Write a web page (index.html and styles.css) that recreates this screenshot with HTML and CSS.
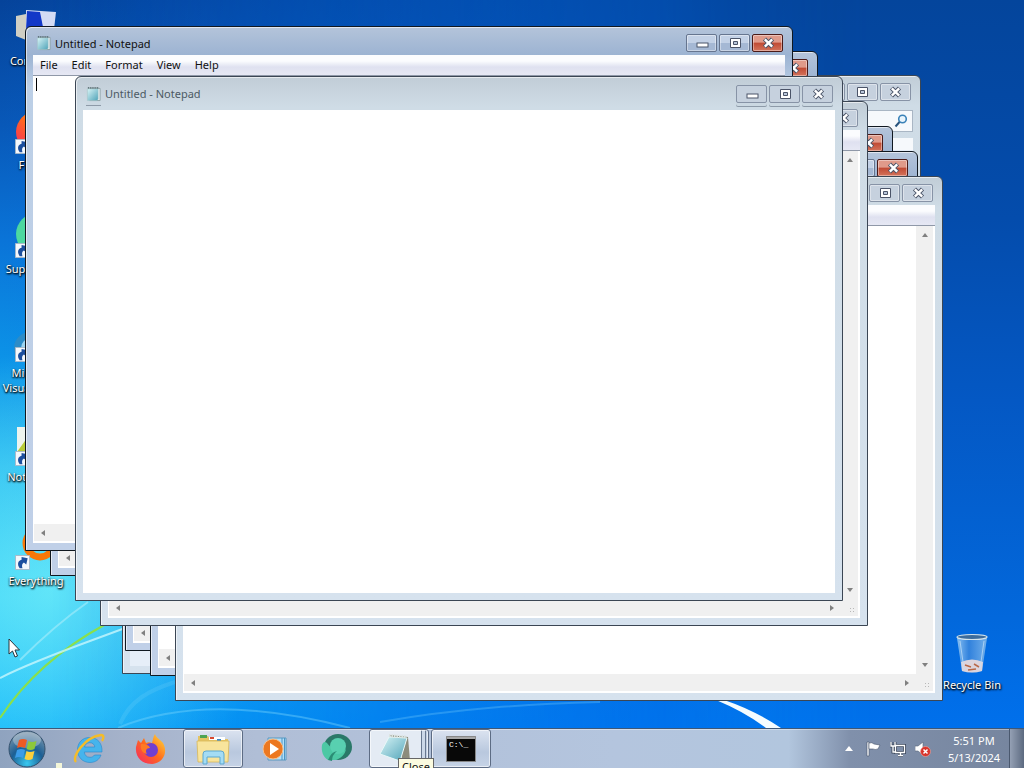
FILE: index.html
```html
<!DOCTYPE html>
<html lang="en">
<head>
    <meta charset="UTF-8">
    <meta name="viewport" content="width=device-width, initial-scale=1.0">
    <title>Desktop</title>
    <link rel="stylesheet" href="styles.css">
</head>
<body>
    <svg class="defs" width="0" height="0" aria-hidden="true">
        <defs>
            <linearGradient id="teal" x1="0" y1="0" x2="1" y2="1">
                <stop offset="0" stop-color="#d8f4f6"/>
                <stop offset="1" stop-color="#4fa3b8"/>
            </linearGradient>
            <linearGradient id="fox" x1="0" y1="1" x2="1" y2="0">
                <stop offset="0" stop-color="#f5246a"/>
                <stop offset="0.5" stop-color="#ff6a1c"/>
                <stop offset="1" stop-color="#ffe23c"/>
            </linearGradient>
            <radialGradient id="orb" cx="0.5" cy="0.9" r="0.9">
                <stop offset="0" stop-color="#38c8f0"/>
                <stop offset="0.5" stop-color="#1c5f94"/>
                <stop offset="1" stop-color="#7f98ac"/>
            </radialGradient>
            <linearGradient id="glass" x1="0" y1="0" x2="1" y2="0">
                <stop offset="0" stop-color="#9cccf4"/>
                <stop offset="0.4" stop-color="#3a86dc"/>
                <stop offset="1" stop-color="#86bcec"/>
            </linearGradient>
        </defs>
        <symbol id="i-min" viewBox="0 0 16 12"><rect x="3" y="6" width="11" height="4" fill="#fff" stroke="#4b5468"/></symbol>
        <symbol id="i-max" viewBox="0 0 16 12"><path d="M3.500 1.500h10v9h-10z" fill="#fff" stroke="#4b5468"/><path d="M6.500 4.500h4v3h-4z" fill="#b9c6da" stroke="#4b5468"/></symbol>
        <symbol id="i-close" viewBox="0 0 16 12"><path d="M4.500 2l8 8M12.500 2l-8 8" stroke="#4b5468" stroke-width="4.400"/><path d="M4.800 2.300l7.400 7.400M12.200 2.300l-7.400 7.400" stroke="#fff" stroke-width="2.400"/></symbol>
        <symbol id="i-note" viewBox="0 0 16 16"><path d="M4 2h11v13H4z" fill="#f4f8f8" stroke="#8aa0a4"/><path d="M1.500 2.500h11.500v11l-1.500 1.500h-10z" fill="url(#teal)" stroke="#a4c4ca" stroke-width=".6"/><path d="M2 1.500h11" stroke="#506468" stroke-width="2" stroke-dasharray="1 1"/></symbol>
        <symbol id="i-short" viewBox="0 0 16 16"><path d="M.5.500h15v15H.500z" fill="#f4f8fc" stroke="#a8b8c8"/><path d="M5 14C2 10 3 6 7 5V2l6.500 1.500L12 10l-2.500-2C7.500 9 7 11.500 8 14z" fill="#1c4f9e"/></symbol>
    </svg>

    <div class="desktop">
        <svg class="wallpaper" viewBox="0 0 1024 728" preserveAspectRatio="none" aria-hidden="true">
            <path d="M0 718C25 680 58 650 106 624" fill="none" stroke="#8be04a" stroke-width="2"/>
            <path d="M0 678C35 660 80 645 125 628" fill="none" stroke="#c8f6fc" stroke-width="2" opacity=".8"/>
            <path d="M20 660C45 635 65 618 88 602" fill="none" stroke="#a8ecfa" stroke-width="2" opacity=".6"/>
            <path d="M118 728C175 704 250 702 350 728" fill="none" stroke="#7cd8fc" stroke-width="2" opacity=".4"/>
            <path d="M120 724C130 700 150 690 175 682" fill="none" stroke="#7cd8fc" stroke-width="4" opacity=".2"/>
            <path d="M380 722C460 708 530 704 600 702" fill="none" stroke="#7cd0fc" stroke-width="2" opacity=".3"/>
            <path d="M724 700Q754 710 781 728H766Q745 712 716 700z" fill="#f4fcff"/>
        </svg>

        <div class="icons">
            <div class="icon">
                <svg width="48" height="48" viewBox="0 0 48 48"><path d="M4 14l10-2v26l-10-4z" fill="#d0cfc4"/><path d="M14 8l30 2-3 26-27-4z" fill="#d4dcf4"/><path d="M15 9l13 1 4 20-18-2z" fill="#1238c8"/></svg>
                <span>Computer</span>
            </div>
            <div class="icon">
                <svg width="48" height="48" viewBox="0 0 48 48"><circle cx="25" cy="26" r="21" fill="url(#fox)"/><circle cx="27" cy="25" r="10" fill="#7340d0"/><use href="#i-short" x="3" y="33" width="15" height="15"/></svg>
                <span>Firefox</span>
            </div>
            <div class="icon">
                <svg width="48" height="48" viewBox="0 0 48 48"><circle cx="25" cy="24" r="21" fill="#4cd8a0"/><use href="#i-short" x="3" y="33" width="15" height="15"/></svg>
                <span>Supermium</span>
            </div>
            <div class="icon">
                <svg width="48" height="48" viewBox="0 0 48 48"><circle cx="18" cy="34" r="16" fill="#2c8cc8"/><circle cx="19" cy="34" r="10" fill="#9cd4f0"/><use href="#i-short" x="3" y="33" width="15" height="15"/></svg>
                <span>Microsoft Visual Studio</span>
            </div>
            <div class="icon">
                <svg width="48" height="48" viewBox="0 0 48 48"><path d="M5 9h38v36H5z" fill="#eef4ee"/><path d="M5 34l10-14 10 14z" fill="#b8cc38"/><use href="#i-short" x="3" y="33" width="15" height="15"/></svg>
                <span>Notepad++</span>
            </div>
            <div class="icon">
                <svg width="48" height="48" viewBox="0 0 48 48"><circle cx="28" cy="21" r="14" fill="none" stroke="#f87808" stroke-width="7"/><use href="#i-short" x="3" y="33" width="15" height="15"/></svg>
                <span>Everything</span>
            </div>
        </div>

        <div class="icon bin">
            <svg width="48" height="48" viewBox="0 0 48 48"><path d="M9 12l5 33q10 3 20 0l5-33z" fill="url(#glass)" opacity=".85"/><path d="M13 36q11-5 22 0l-1 9q-10 3-20 0z" fill="#dcd4dc"/><path d="M17 39l6 2M26 38l5 3M20 44l8-1" stroke="#b86848" stroke-width="1.500"/><ellipse cx="24" cy="11" rx="15" ry="2.500" fill="#3c6c9c" stroke="#d4e4ec" stroke-width="1.200"/><path d="M12 15l4 28M36 15l-4 28" stroke="#c4e0f8" opacity=".7"/></svg>
            <span>Recycle Bin</span>
        </div>

        <div class="window explorer">
            <div class="title">
                <div class="buttons">
                    <button aria-label="Minimize"><svg><use href="#i-min"/></svg></button>
                    <button aria-label="Maximize"><svg><use href="#i-max"/></svg></button>
                    <button aria-label="Close"><svg><use href="#i-close"/></svg></button>
                </div>
            </div>
            <div class="search">
                <input type="text" aria-label="Search">
                <svg width="14" height="14" viewBox="0 0 14 14"><circle cx="8.500" cy="5" r="3.800" fill="#e8f4fc" stroke="#3a82b8" stroke-width="1.600"/><path d="M5.500 8L1.500 12.500" stroke="#27537c" stroke-width="2"/></svg>
            </div>
            <div class="client"></div>
        </div>

        <div class="window active w5">
            <div class="title">
                <div class="buttons">
                    <button aria-label="Minimize"><svg><use href="#i-min"/></svg></button>
                    <button aria-label="Maximize"><svg><use href="#i-max"/></svg></button>
                    <button class="close" aria-label="Close"><svg><use href="#i-close"/></svg></button>
                </div>
            </div>
            <div class="menu"></div>
            <div class="client">
                <textarea aria-label="Text"></textarea>
                <div class="vscroll"><i class="up"></i><i class="down"></i></div>
                <div class="hscroll"><i class="left"></i><i class="right"></i></div>
                <div class="grip"></div>
            </div>
        </div>

        <div class="window active w6">
            <div class="title">
                <div class="buttons">
                    <button aria-label="Minimize"><svg><use href="#i-min"/></svg></button>
                    <button aria-label="Maximize"><svg><use href="#i-max"/></svg></button>
                    <button class="close" aria-label="Close"><svg><use href="#i-close"/></svg></button>
                </div>
            </div>
            <div class="menu"></div>
            <div class="client">
                <textarea aria-label="Text"></textarea>
                <div class="vscroll"><i class="up"></i><i class="down"></i></div>
                <div class="hscroll"><i class="left"></i><i class="right"></i></div>
                <div class="grip"></div>
            </div>
        </div>

        <div class="window w7">
            <div class="title">
                <div class="buttons">
                    <button aria-label="Minimize"><svg><use href="#i-min"/></svg></button>
                    <button aria-label="Maximize"><svg><use href="#i-max"/></svg></button>
                    <button aria-label="Close"><svg><use href="#i-close"/></svg></button>
                </div>
            </div>
            <div class="menu"></div>
            <div class="client">
                <textarea aria-label="Text"></textarea>
                <div class="vscroll"><i class="up"></i><i class="down"></i></div>
                <div class="hscroll"><i class="left"></i><i class="right"></i></div>
                <div class="grip"></div>
            </div>
        </div>

        <div class="window w4">
            <div class="title">
                <div class="buttons">
                    <button aria-label="Minimize"><svg><use href="#i-min"/></svg></button>
                    <button aria-label="Maximize"><svg><use href="#i-max"/></svg></button>
                    <button aria-label="Close"><svg><use href="#i-close"/></svg></button>
                </div>
            </div>
            <div class="menu"></div>
            <div class="client">
                <textarea aria-label="Text"></textarea>
                <div class="vscroll"><i class="up"></i><i class="down"></i></div>
                <div class="hscroll"><i class="left"></i><i class="right"></i></div>
                <div class="grip"></div>
            </div>
        </div>

        <div class="window active w2">
            <div class="title">
                <div class="buttons">
                    <button aria-label="Minimize"><svg><use href="#i-min"/></svg></button>
                    <button aria-label="Maximize"><svg><use href="#i-max"/></svg></button>
                    <button class="close" aria-label="Close"><svg><use href="#i-close"/></svg></button>
                </div>
            </div>
            <div class="menu"></div>
            <div class="client">
                <textarea aria-label="Text"></textarea>
                <div class="vscroll"><i class="up"></i><i class="down"></i></div>
                <div class="hscroll"><i class="left"></i><i class="right"></i></div>
                <div class="grip"></div>
            </div>
        </div>

        <div class="window active w1">
            <div class="title">
                <svg class="note" width="15" height="16"><use href="#i-note"/></svg>
                <span>Untitled - Notepad</span>
                <div class="buttons">
                    <button aria-label="Minimize"><svg><use href="#i-min"/></svg></button>
                    <button aria-label="Maximize"><svg><use href="#i-max"/></svg></button>
                    <button class="close" aria-label="Close"><svg><use href="#i-close"/></svg></button>
                </div>
            </div>
            <div class="menu">
                <button>File</button>
                <button>Edit</button>
                <button>Format</button>
                <button>View</button>
                <button>Help</button>
            </div>
            <div class="client">
                <textarea aria-label="Text"></textarea>
                <div class="vscroll"><i class="up"></i><i class="down"></i></div>
                <div class="hscroll"><i class="left"></i><i class="right"></i></div>
                <div class="grip"></div>
                <div class="caret"></div>
            </div>
        </div>

        <div class="window w3">
            <div class="title">
                <svg class="note" width="15" height="16"><use href="#i-note"/></svg>
                <span>Untitled - Notepad</span>
                <div class="buttons">
                    <button aria-label="Minimize"><svg><use href="#i-min"/></svg></button>
                    <button aria-label="Maximize"><svg><use href="#i-max"/></svg></button>
                    <button aria-label="Close"><svg><use href="#i-close"/></svg></button>
                </div>
            </div>
            <div class="client blank">
                <textarea aria-label="Text"></textarea>
            </div>
        </div>

        <svg class="pointer" width="13" height="20" viewBox="0 0 13 20" aria-hidden="true"><path d="M1 1v15l3.500-3 2.500 6 2.500-1-2.500-6h4.500z" fill="#fff" stroke="#28343c"/></svg>
    </div>

    <div class="taskbar">
        <button class="start" aria-label="Start">
            <svg width="38" height="38" viewBox="0 0 38 38"><circle cx="19" cy="19" r="18" fill="url(#orb)" stroke="#33506c"/><ellipse cx="19" cy="10" rx="14" ry="8" fill="#fff" opacity=".3"/><path d="M11 10q4-2 8 0l-2 8q-4-2-8 0z" fill="#ec5a24"/><path d="M20.500 11q3 2 8 0l-2 8q-4 2-8 0z" fill="#8cc83c"/><path d="M9 20q4-2 8 0l-2 8q-4-2-8 0z" fill="#3c9ce8"/><path d="M18.500 21q3 2 8 0l-2 8q-4 2-8 0z" fill="#fcd03c"/></svg>
        </button>
        <div class="tasks">
            <button aria-label="Internet Explorer">
                <svg width="32" height="32" viewBox="0 0 32 32"><path d="M16.500 4.500C9 4.500 4.500 10 4.500 17S9.500 29.500 17 29.500c5.500 0 9.500-3 11-7.500h-6.500c-1 1.500-2.500 2.300-4.500 2.300-3.500 0-5.500-2.300-5.700-5.300H29C29.500 10 24.500 4.500 16.500 4.500zM11.500 14c.6-2.700 2.500-4.300 5.300-4.300s4.600 1.600 5 4.300z" fill="#46b4ec" stroke="#2888cc" stroke-width=".6"/><path d="M3 29C-2 24 12 4 28 2c3 0 3 3 1 6" fill="none" stroke="#f4bc28" stroke-width="2.400"/></svg>
            </button>
            <button aria-label="Firefox">
                <svg width="32" height="32" viewBox="0 0 32 32"><path d="M20 1c1 4 5 5 8 9 5 9 1 20-11 21C7 31 0 24 1 14l2-7 3 3 3-5 2 5c2-1 4-1 6 0 1-3 1-6 3-9z" fill="url(#fox)"/><circle cx="16" cy="17" r="7" fill="#6f3fd0"/><path d="M6 11c5 0 8 1 9 4-4 0-5 3-3 6-5-1-7-5-6-10z" fill="#ff7a24"/></svg>
            </button>
            <button class="open" aria-label="Windows Explorer">
                <svg width="36" height="34" viewBox="0 0 36 34"><path d="M3 4h10l2 3h18v23H3z" fill="#e4c464"/><path d="M5 3h7v3H5z" fill="#4ca454"/><path d="M14 5h16v3H14z" fill="#fff"/><path d="M15 5h4v2h-4z" fill="#d84830"/><path d="M22 7h4v2h-4z" fill="#3c88c8"/><path d="M2 9h32l-1 21H3z" fill="#f8e49c" stroke="#d8b858" stroke-width=".8"/><path d="M8 32V22q0-3 3-3h15q3 0 3 3v10h-4v-7H12v7z" fill="#a4dcf4" stroke="#5ca8d0"/></svg>
            </button>
            <button aria-label="Windows Media Player">
                <svg width="30" height="28" viewBox="0 0 30 28"><path d="M8 3h18v22H8z" fill="#b4e0f8" stroke="#5898c0"/><path d="M22 3v22M24.500 3v22" stroke="#4c94c4"/><circle cx="13" cy="14" r="10" fill="#ec7820" stroke="#f8c08c"/><path d="M10 8l9 6-9 6z" fill="#fff"/></svg>
            </button>
            <button aria-label="Supermium">
                <svg width="34" height="32" viewBox="0 0 34 32"><ellipse cx="18" cy="14" rx="14" ry="13" fill="#2a7868"/><path d="M2 12C3 9 5 8 7 10c3 4 8 8 13 8 3 0 5-1 6-2-1 6-5 9-10 11H8C3 24 1 18 2 12z" fill="#4cc8a4"/><circle cx="18" cy="13" r="8" fill="#58d0b0"/><path d="M8 27q3-8 9-9-5 4-5 10z" fill="#2a8c74"/></svg>
            </button>
            <button class="open stack" aria-label="Notepad">
                <svg width="34" height="32" viewBox="0 0 34 32"><path d="M12 2l18 2 2 24-6 1z" fill="#8c8c7c"/><path d="M11 4l18 1-7 23-20-7z" fill="url(#teal)" stroke="#e8f8f8"/><path d="M11 2.500l17 1.500" stroke="#dce4e0" stroke-width="3" stroke-dasharray="1.500 1"/></svg>
            </button>
            <button class="open" aria-label="Command Prompt">
                <svg width="30" height="26" viewBox="0 0 30 26"><path d="M.5.500h29v25H.500z" fill="#080808" stroke="#888"/><path d="M1 1h28v2H1z" fill="#a8a8a8"/><text x="3" y="11" class="prompt">C:\_</text></svg>
            </button>
        </div>
        <div class="tray">
            <svg width="8" height="5" viewBox="0 0 8 5"><path d="M0 5l4-5 4 5z" fill="#fff"/></svg>
            <svg width="16" height="16" viewBox="0 0 16 16"><path d="M2 1h2v14H2z" fill="#fff" stroke="#44526a" stroke-width=".6"/><path d="M4 2q3-1 5 1l6 1-2 4q-3 1-5 0H4z" fill="#fff" stroke="#44526a" stroke-width=".6"/></svg>
            <svg width="16" height="16" viewBox="0 0 16 16"><path d="M5.500 4.500h9v7h-9zM8 14.500h5M10.500 12v3M1 1v4h4V1M3 5v6h2" fill="none" stroke="#3c485c" stroke-width="3"/><path d="M5.500 4.500h9v7h-9zM8 14.500h5M10.500 12v3M1 1v4h4V1M3 5v6h2" fill="none" stroke="#fff" stroke-width="1.300"/></svg>
            <svg width="16" height="16" viewBox="0 0 16 16"><path d="M0 5h3l5-4v13l-5-4H0z" fill="#fff" stroke="#58647a" stroke-width=".6"/><circle cx="10.500" cy="10.500" r="5" fill="#d8342c" stroke="#f0a8a0" stroke-width=".6"/><path d="M8.500 8.500l4 4M12.500 8.500l-4 4" stroke="#fff" stroke-width="1.500"/></svg>
            <div class="clock">
                <div>5:51 PM</div>
                <div>5/13/2024</div>
            </div>
            <button class="show" aria-label="Show desktop"></button>
        </div>
        <div class="tip">Close</div>
        <div class="speck"></div>
    </div>
</body>
</html>
```
FILE: styles.css
```css
*{
    margin: 0;
    padding: 0;
    box-sizing: border-box;
}

body{
    height: 100vh;
    display: flex;
    flex-direction: column;
    overflow: hidden;
    font-family: "Noto Sans", "Open Sans", sans-serif;
    font-size: 11px;
    line-height: 15px;
    color: #111;
}

button{
    font: inherit;
    color: inherit;
    background: none;
    border: none;
}

.defs{
    position: absolute;
}

.desktop{
    flex: 1;
    position: relative;
    overflow: hidden;
    background:
        radial-gradient(ellipse 220px 240px at 50px 590px, rgba(120, 245, 250, 0.7), rgba(60, 210, 250, 0)),
        radial-gradient(ellipse 200px 120px at 980px 0, rgba(20, 84, 150, 0.6), rgba(20, 84, 150, 0)),
        linear-gradient(90deg, rgba(0, 100, 220, 0) 0%, rgba(0, 108, 236, 0.8) 65%, rgba(0, 96, 220, 0) 85%),
        linear-gradient(#05439a 0%, #0858b8 17%, #0a74d8 33%, #0c94e8 50%, #22b4f0 64%, #2cc4f6 82%, #08aefa 100%);
}

/* the right side of the sky stays dark further down */
.desktop::before{
    content: "";
    position: absolute;
    inset: 0;
    background: linear-gradient(#04459c, #044cac 30%, #0458c4 55%, #0268dc 85%, #0070ec);
    mask-image: linear-gradient(90deg, transparent 5%, black 85%);
}

.wallpaper{
    position: relative;
    display: block;
    width: 100%;
    height: 100%;
}

/* desktop icons */
.icons{
    position: absolute;
    top: 2px;
    left: 0;
}

.icon{
    width: 72px;
    height: 104px;
    display: flex;
    flex-direction: column;
    align-items: center;
    gap: 3px;
    color: white;
    text-align: center;
    text-shadow: 1px 1px 2px black, 0 1px 2px black;
}

.bin{
    position: absolute;
    right: 16px;
    bottom: -2px;
}

/* windows */
.window{
    position: absolute;
    width: 75%;
    height: 525px;
    padding: 0 7px 7px;
    display: flex;
    flex-direction: column;
    border: 1px solid #3b4654;
    border-radius: 6px 6px 0 0;
    background: linear-gradient(#c1cdd7, #cfdce6 30px, #d6e2ee);
    box-shadow: inset 1px 1px 0 rgba(255, 255, 255, 0.6);
}

.active{
    border-color: #101820;
    background: linear-gradient(#b4c4da, #9cb3d2 28px, #bccfe6 60px, #c0d0e8);
}

.w1{ left: 25px; top: 26px; }
.w2{ left: 50px; top: 51px; }
.w3{ left: 75px; top: 76px; }
.w4{ left: 100px; top: 101px; }
.w5{ left: 125px; top: 126px; }
.w6{ left: 150px; top: 151px; }
.w7{ left: 175px; top: 176px; }

.explorer{
    left: 122px;
    top: 75px;
    width: 78%;
    height: 599px;
}

.title{
    height: 28px;
    padding: 4px 2px 0 3px;
    display: flex;
    align-items: center;
    gap: 4px;
}

.w3 .title{
    height: 33px;
    padding: 0 2px 0 3px;
    color: #4c5a64;
}

.w3 .note,
.w3 .buttons button{
    box-shadow: 0 3px 0 #cbd8e2, 0 4px 0 #8d9aa8;
}

.buttons{
    margin-left: auto;
    display: flex;
    gap: 2px;
}

.buttons button{
    width: 31px;
    height: 18px;
    display: flex;
    align-items: center;
    justify-content: center;
    border: 1px solid #8793a6;
    border-radius: 2px;
    background: #c6d1de;
    box-shadow: inset 0 0 0 1px rgba(255, 255, 255, 0.4);
}

.active .buttons button{
    border-color: #66758f;
    background: linear-gradient(#c3d1e6 50%, #a5b8d4 50%);
}

.active .buttons .close{
    border-color: #4a1a18;
    background: linear-gradient(#e09a8a 45%, #c04a34 50%, #d4745c);
}

.buttons svg{
    width: 16px;
    height: 12px;
}

.menu{
    height: 21px;
    padding-bottom: 1px;
    display: flex;
    background: linear-gradient(#fbfcfe 30%, #dfe1f0 60%, #e6e8f4);
    border-bottom: 1px solid #8f98a8;
}

.menu button{
    padding: 0 7px;
}

.client{
    flex: 1;
    position: relative;
    display: grid;
    grid-template-columns: 1fr 17px;
    grid-template-rows: 1fr 17px;
    padding: 0 2px 2px 1px;
    background: white;
}

.blank{
    display: flex;
    padding: 0;
}

.client textarea{
    width: 100%;
    height: 100%;
    border: none;
    outline: none;
    resize: none;
    background: white;
}

.vscroll,
.hscroll{
    display: flex;
    justify-content: space-between;
    align-items: center;
    padding: 7px;
    background: #f0f0f0;
}

.vscroll{
    flex-direction: column;
}

.vscroll i,
.hscroll i{
    border: 3px solid transparent;
}

.vscroll .up{ border-top-width: 0; border-bottom: 4px solid #808080; }
.vscroll .down{ border-bottom-width: 0; border-top: 4px solid #808080; }
.hscroll .left{ border-left-width: 0; border-right: 4px solid #808080; }
.hscroll .right{ border-right-width: 0; border-left: 4px solid #808080; }

.grip{
    padding: 8px 2px 2px 8px;
    background: radial-gradient(circle, #b8b8b8 1px, transparent 1px) 0 0 / 3px 3px content-box, #f0f0f0;
}

.caret{
    position: absolute;
    left: 3px;
    top: 2px;
    width: 1px;
    height: 13px;
    background: black;
}

.search{
    position: relative;
    height: 34px;
    display: flex;
    justify-content: flex-end;
    align-items: center;
}

.search input{
    width: 200px;
    height: 22px;
    border: 1px solid #a9b6c4;
    background: #f6f9fc;
}

.search svg{
    position: absolute;
    right: 5px;
}

.explorer .client{
    background: linear-gradient(#f6f9fc 12px, #e6eef8 12px);
}

.pointer{
    position: absolute;
    left: 8px;
    top: 638px;
}

/* taskbar */
.taskbar{
    position: relative;
    height: 40px;
    display: flex;
    overflow: hidden;
    border-top: 1px solid #3e5878;
    background: linear-gradient(90deg, #8fa3bf 0%, #a5b2ca 12%, #b0bed6 25%, #b4c5de 60%, #b2c6de 77%, #8090ab 83%, #76859e 100%);
    box-shadow: inset 0 1px 0 rgba(255, 255, 255, 0.4);
}

.start{
    width: 58px;
    padding-right: 4px;
    display: flex;
    align-items: center;
    justify-content: center;
}

.tasks{
    display: flex;
    gap: 2px;
    padding-left: 1px;
}

.tasks button{
    width: 60px;
    display: flex;
    align-items: center;
    justify-content: center;
}

.tasks .open{
    border: 1px solid #5d6c84;
    border-radius: 3px;
    background: linear-gradient(#dbe3f0, #b9c8de 60%, #c6d3e6);
    box-shadow: inset 0 0 0 1px rgba(255, 255, 255, 0.6);
}

.tasks .stack{
    padding-right: 8px;
    background: linear-gradient(90deg, #e4ebf4 51px, #68778f 51px, #68778f 52px, #ccd8e8 52px, #ccd8e8 55px, #68778f 55px, #68778f 56px, #c0cee2 56px);
}

.prompt{
    font-family: "Liberation Mono", monospace;
    font-size: 8px;
    fill: white;
}

.tray{
    margin-left: auto;
    display: flex;
    align-items: center;
    gap: 9px;
    color: white;
}

.tray svg:first-child{
    margin-right: 3px;
}

.clock{
    width: 68px;
    line-height: 17px;
    text-align: center;
}

.show{
    align-self: stretch;
    width: 15px;
    margin-left: -8px;
    border-left: 1px solid #4a586e;
    background: linear-gradient(90deg, #94a0b4, #5c6a80);
}

.tip{
    position: absolute;
    left: 398px;
    top: 29px;
    padding: 0 3px;
    border: 1px solid #666;
    background: #fbfbe0;
}

.speck{
    position: absolute;
    left: 56px;
    top: 34px;
    width: 6px;
    height: 6px;
    background: #f4f6d8;
}
```
